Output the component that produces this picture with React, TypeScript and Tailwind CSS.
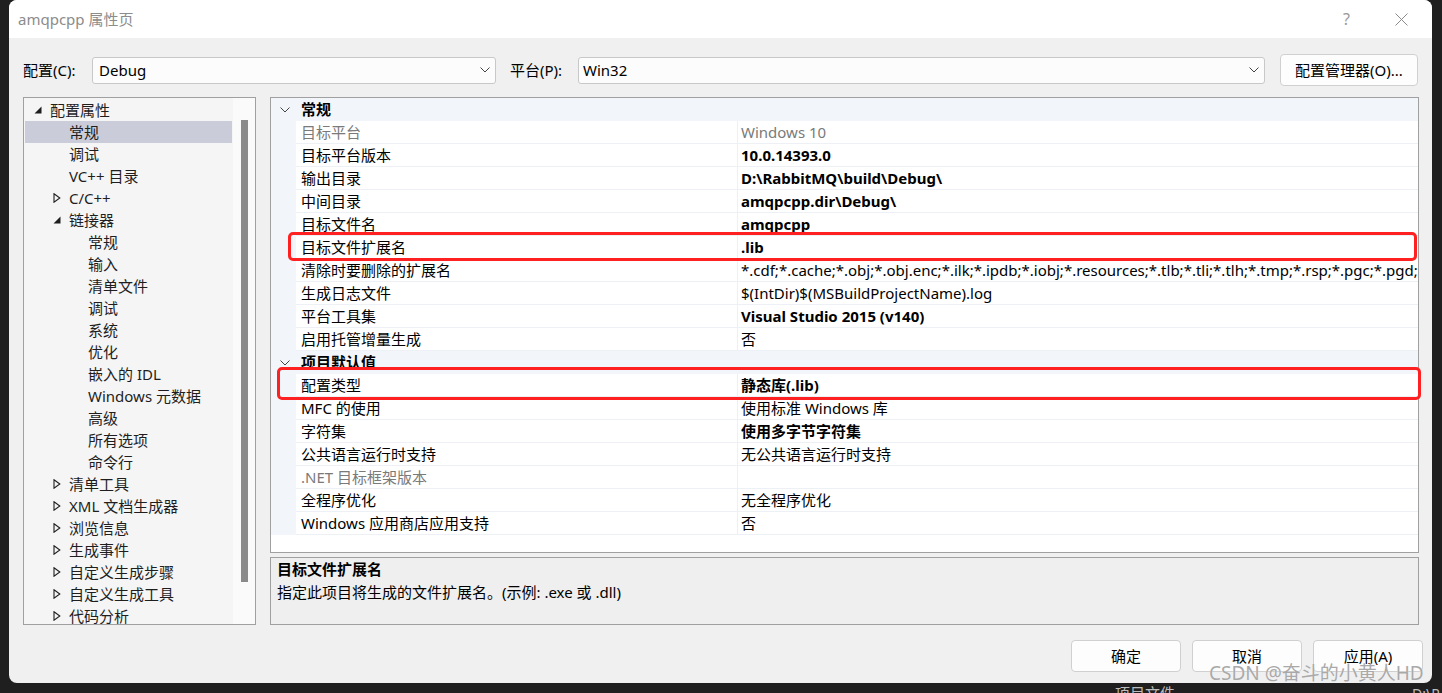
import React from "react";

type TreeItem = { t: string; lvl: 0 | 1 | 2; tri?: "open" | "closed"; sel?: boolean };

const tree: TreeItem[] = [
  { t: "配置属性", lvl: 0, tri: "open" },
  { t: "常规", lvl: 1, sel: true },
  { t: "调试", lvl: 1 },
  { t: "VC++ 目录", lvl: 1 },
  { t: "C/C++", lvl: 1, tri: "closed" },
  { t: "链接器", lvl: 1, tri: "open" },
  { t: "常规", lvl: 2 },
  { t: "输入", lvl: 2 },
  { t: "清单文件", lvl: 2 },
  { t: "调试", lvl: 2 },
  { t: "系统", lvl: 2 },
  { t: "优化", lvl: 2 },
  { t: "嵌入的 IDL", lvl: 2 },
  { t: "Windows 元数据", lvl: 2 },
  { t: "高级", lvl: 2 },
  { t: "所有选项", lvl: 2 },
  { t: "命令行", lvl: 2 },
  { t: "清单工具", lvl: 1, tri: "closed" },
  { t: "XML 文档生成器", lvl: 1, tri: "closed" },
  { t: "浏览信息", lvl: 1, tri: "closed" },
  { t: "生成事件", lvl: 1, tri: "closed" },
  { t: "自定义生成步骤", lvl: 1, tri: "closed" },
  { t: "自定义生成工具", lvl: 1, tri: "closed" },
  { t: "代码分析", lvl: 1, tri: "closed" },
];

const indent = ["pl-[9px]", "pl-[28px]", "pl-[47px]"];

type Prop = { name: string; value: string; bold?: boolean; dim?: boolean };

const general: Prop[] = [
  { name: "目标平台", value: "Windows 10", dim: true },
  { name: "目标平台版本", value: "10.0.14393.0", bold: true },
  { name: "输出目录", value: "D:\\RabbitMQ\\build\\Debug\\", bold: true },
  { name: "中间目录", value: "amqpcpp.dir\\Debug\\", bold: true },
  { name: "目标文件名", value: "amqpcpp", bold: true },
  { name: "目标文件扩展名", value: ".lib", bold: true },
  {
    name: "清除时要删除的扩展名",
    value:
      "*.cdf;*.cache;*.obj;*.obj.enc;*.ilk;*.ipdb;*.iobj;*.resources;*.tlb;*.tli;*.tlh;*.tmp;*.rsp;*.pgc;*.pgd;*.meta;*.tlog;*.manifest;*.res;*.pch;*.exp",
  },
  { name: "生成日志文件", value: "$(IntDir)$(MSBuildProjectName).log" },
  { name: "平台工具集", value: "Visual Studio 2015 (v140)", bold: true },
  { name: "启用托管增量生成", value: "否" },
];

const defaults: Prop[] = [
  { name: "配置类型", value: "静态库(.lib)", bold: true },
  { name: "MFC 的使用", value: "使用标准 Windows 库" },
  { name: "字符集", value: "使用多字节字符集", bold: true },
  { name: "公共语言运行时支持", value: "无公共语言运行时支持" },
  { name: ".NET 目标框架版本", value: "", dim: true },
  { name: "全程序优化", value: "无全程序优化" },
  { name: "Windows 应用商店应用支持", value: "否" },
];

function Chevron({ className }: { className?: string }) {
  return (
    <svg width="10" height="6" viewBox="0 0 10 6" className={className}>
      <path d="M0.5 0.5 L5 5 L9.5 0.5" fill="none" stroke="#444" strokeWidth="1" />
    </svg>
  );
}

function TreeTri({ kind }: { kind?: "open" | "closed" }) {
  if (kind === "open")
    return (
      <svg width="8" height="8" viewBox="0 0 8 8">
        <path d="M7.5 0.5 L7.5 7.5 L0.5 7.5 Z" fill="#1e1e1e" />
      </svg>
    );
  if (kind === "closed")
    return (
      <svg width="8" height="10" viewBox="0 0 8 10">
        <path d="M1 0.8 L6.8 5 L1 9.2 Z" fill="none" stroke="#1e1e1e" strokeWidth="1.1" />
      </svg>
    );
  return null;
}

function Category({ title }: { title: string }) {
  return (
    <div className="flex h-[23px] items-center bg-[#f2f5fa]">
      <div className="flex w-[25px] justify-center pl-[2px]">
        <Chevron />
      </div>
      <span className="pl-[5px] font-bold text-black">{title}</span>
    </div>
  );
}

function Row({ p }: { p: Prop }) {
  const tone = p.dim ? "text-[#7a7a7a]" : "text-black";
  return (
    <div className="flex h-[23px]">
      <div className="w-[25px] shrink-0 bg-[#f2f5fa]" />
      <div className="flex min-w-0 flex-1 border-b border-[#edf0f5] bg-white">
        <div className={`w-[441px] shrink-0 overflow-hidden whitespace-nowrap pl-[5px] leading-[22px] ${tone}`}>
          {p.name}
        </div>
        <div className="w-px shrink-0 bg-[#edf0f5]" />
        <div
          className={`min-w-0 flex-1 overflow-hidden whitespace-nowrap pl-[3px] leading-[22px] ${tone} ${
            p.bold ? "font-bold" : ""
          }`}
        >
          {p.value}
        </div>
      </div>
    </div>
  );
}

function Btn({ label }: { label: string }) {
  return (
    <div className="flex h-[32px] w-[110px] items-center justify-center rounded-[4px] border border-[#d0d0d0] bg-[#fdfdfd] text-black">
      {label}
    </div>
  );
}

export default function App() {
  return (
    <div className="relative h-[693px] w-[1442px] overflow-hidden bg-[#1f1f1f] font-['Noto_Sans','Noto_Sans_CJK_SC',sans-serif] text-[15px] leading-[23px]">
      <div className="ml-[9px] flex h-[683px] w-[1423px] flex-col rounded-[8px] bg-[#f0f0f0]">
        {/* title bar */}
        <div className="flex h-[38px] items-center rounded-t-[8px] bg-white pl-[9px] pr-[24px]">
          <span className="text-[#8c8c8c]">amqpcpp 属性页</span>
          <span className="ml-auto mr-[45px] text-[16px] text-[#9a9a9a]">?</span>
          <svg width="13" height="13" viewBox="0 0 13 13">
            <path d="M0.5 0.5 L12.5 12.5 M12.5 0.5 L0.5 12.5" stroke="#8a8a8a" strokeWidth="1" />
          </svg>
        </div>

        {/* config row */}
        <div className="mt-[16px] flex h-[32px] items-center pl-[14px]">
          <span className="w-[69px] text-black">配置(C):</span>
          <div className="flex h-[27px] w-[404px] items-center rounded-[3px] border border-[#c8c8c8] bg-[#fcfcfc] pl-[6px] pr-[5px]">
            <span className="text-black">Debug</span>
            <Chevron className="ml-auto" />
          </div>
          <span className="ml-[14px] w-[68px] text-black">平台(P):</span>
          <div className="flex h-[27px] w-[687px] items-center rounded-[3px] border border-[#c8c8c8] bg-[#fcfcfc] pl-[4px] pr-[5px]">
            <span className="text-black">Win32</span>
            <Chevron className="ml-auto" />
          </div>
          <div className="ml-[15px] flex h-[32px] w-[138px] items-center justify-center rounded-[4px] border border-[#d0d0d0] bg-[#fdfdfd] text-black">
            配置管理器(O)...
          </div>
        </div>

        {/* main area */}
        <div className="mt-[11px] flex h-[528px] pl-[14px] pr-[13px]">
          {/* tree */}
          <div className="flex w-[233px] shrink-0 border border-[#a0a0a0] bg-[#f5f5f5]">
            <div className="w-[209px] overflow-hidden px-[1px] pt-[1px]">
              {tree.map((it, i) => (
                <div
                  key={i}
                  className={`flex h-[22px] items-center whitespace-nowrap ${indent[it.lvl]} ${
                    it.sel ? "bg-[#cacdd9]" : ""
                  }`}
                >
                  <div className="flex w-[16px] items-center">
                    <TreeTri kind={it.tri} />
                  </div>
                  <span className="text-[#1e1e1e]">{it.t}</span>
                </div>
              ))}
            </div>
            <div className="flex flex-1 justify-center bg-[#fafafa] pt-[22px]">
              <div className="h-[462px] w-[7px] bg-[#8a8a8a]" />
            </div>
          </div>

          {/* right */}
          <div className="ml-[14px] flex min-w-0 flex-1 flex-col">
            <div className="h-[456px] overflow-hidden border border-[#a0a0a0] bg-white">
              <Category title="常规" />
              {general.map((p, i) => (
                <Row key={i} p={p} />
              ))}
              <Category title="项目默认值" />
              {defaults.map((p, i) => (
                <Row key={i} p={p} />
              ))}
            </div>
            <div className="mt-[4px] flex-1 border border-[#a0a0a0] bg-[#efefef] px-[6px]">
              <div className="font-bold text-black">目标文件扩展名</div>
              <div className="text-black">指定此项目将生成的文件扩展名。(示例: .exe 或 .dll)</div>
            </div>
          </div>
        </div>

        {/* buttons */}
        <div className="mt-[15px] flex justify-end gap-[11px] pr-[9px]">
          <Btn label="确定" />
          <Btn label="取消" />
          <Btn label="应用(A)" />
        </div>
      </div>

      {/* dark background fragments */}
      <div className="absolute left-[1115px] top-[682px] text-[15px] text-[#bcbcbc]">项目文件</div>
      <div className="absolute left-[1412px] top-[682px] text-[14px] text-[#bcbcbc]">D:\R</div>

      {/* annotation boxes */}
      <div className="absolute left-[288px] top-[232px] h-[29px] w-[1129px] rounded-[5px] border-[3px] border-[#ff2121]" />
      <div className="absolute left-[277px] top-[367px] h-[33px] w-[1144px] rounded-[5px] border-[3px] border-[#ff2121]" />

      {/* watermark */}
      <div className="absolute left-[1209px] top-[660px] text-[19px] leading-[27px] text-[#a9a9a9] [text-shadow:0_0_1px_rgba(255,255,255,0.8)]">
        CSDN @奋斗的小黄人HD
      </div>
    </div>
  );
}
